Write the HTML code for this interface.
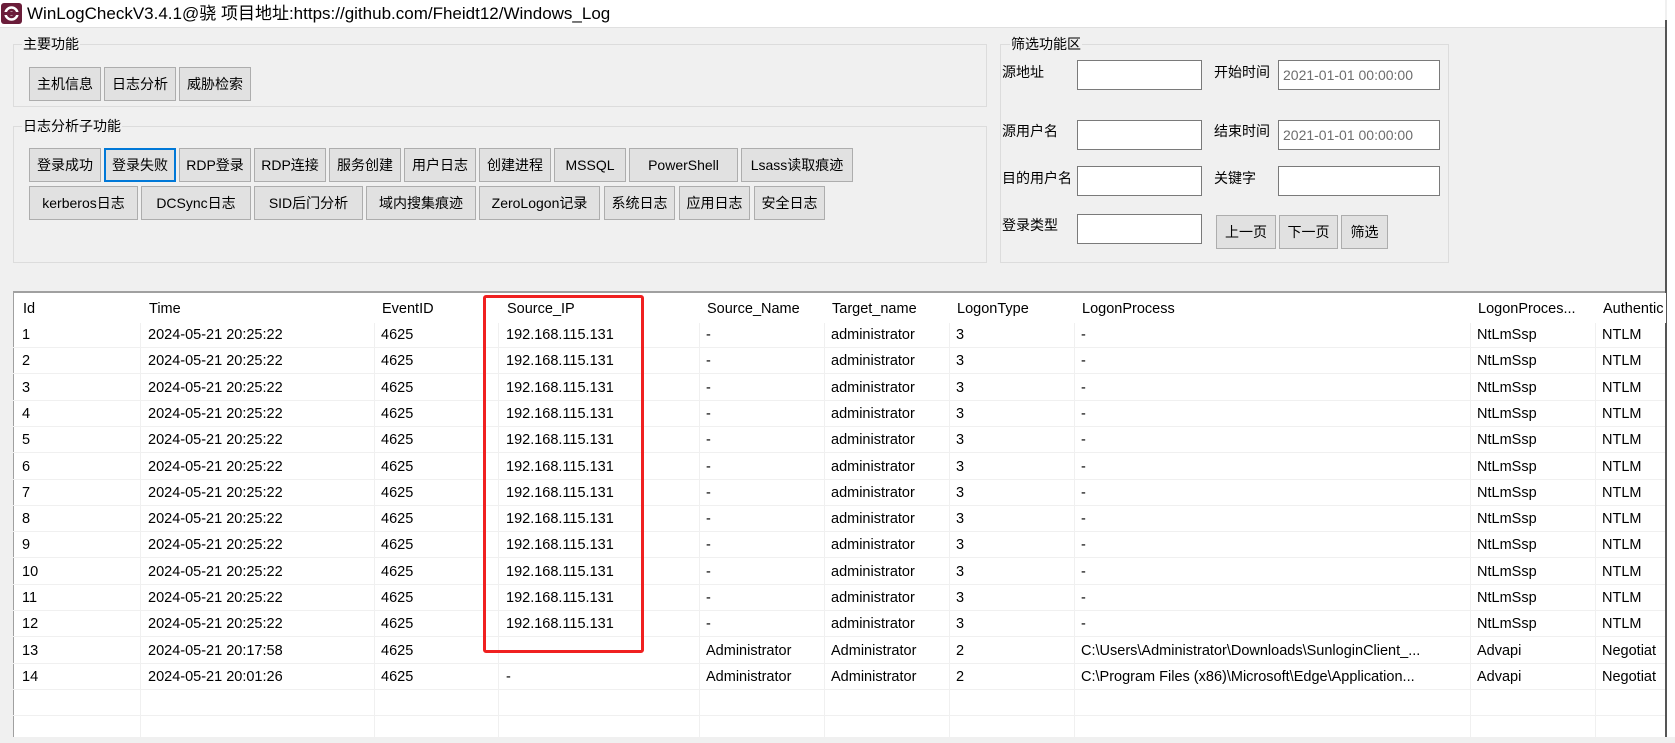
<!DOCTYPE html>
<html><head><meta charset="utf-8"><style>
*{box-sizing:border-box;margin:0;padding:0}
body{width:1675px;height:737px;background:#f0f0f0;font-family:"Liberation Sans","Noto Sans CJK SC",sans-serif;color:#000;position:relative;overflow:hidden}
.a{position:absolute;white-space:nowrap}
.title{left:0;top:0;width:1665px;height:28px;background:#fff;border-bottom:1px solid #e0e0e0}
.gb{position:absolute;border:1px solid #dcdcdc}
.lbl{position:absolute;font-size:14px;background:#f0f0f0;padding:0 1px;line-height:16px}
.btn{position:absolute;background:#e1e1e1;border:1px solid #adadad;font-size:14px;display:flex;align-items:center;justify-content:center;white-space:nowrap}
.in{position:absolute;background:#fff;border:1px solid #7a7a7a;font-size:14px;color:#6d6d6d;padding:0 4px;display:flex;align-items:center;white-space:nowrap}
.fl{position:absolute;font-size:14px;white-space:nowrap}
.tbl{position:absolute;left:13px;top:291px;width:1652px;height:446px;background:#fff;border-top:2px solid #a0a0a0;border-left:1px solid #a0a0a0}
.row{position:absolute;left:0;width:1652px;height:26px;border-bottom:1px solid #f0f0f0}
.c{position:absolute;top:0;height:26px;line-height:26px;font-size:14.5px;white-space:nowrap}
.vl{position:absolute;top:0;width:1px;height:446px;background:#f0f0f0}
</style></head><body>
<div class="a title"></div>
<svg class="a" style="left:1px;top:3px" width="21" height="21" viewBox="0 0 21 21"><rect width="21" height="21" rx="3" fill="#6b1d3a"/><circle cx="10.5" cy="10.5" r="6" fill="none" stroke="#fff" stroke-width="2.5"/><circle cx="10.5" cy="10.5" r="2" fill="#fff"/><rect x="0" y="9" width="21" height="3" fill="#6b1d3a"/></svg>
<div class="a" style="left:27px;top:3px;font-size:17px;line-height:22px">WinLogCheckV3.4.1@骁 项目地址:https://github.com/Fheidt12/Windows_Log</div>
<div class="a" style="left:1665px;top:20px;width:2px;height:717px;background:#555"></div>
<div class="a" style="left:1667px;top:0;width:8px;height:737px;background:#fff"></div>

<div class="gb" style="left:13px;top:44px;width:974px;height:63px"></div>
<div class="lbl" style="left:22px;top:36px">主要功能</div>
<div class="btn" style="left:29px;top:67px;width:72px;height:34px">主机信息</div>
<div class="btn" style="left:104px;top:67px;width:72px;height:34px">日志分析</div>
<div class="btn" style="left:179px;top:67px;width:72px;height:34px">威胁检索</div>

<div class="gb" style="left:13px;top:126px;width:974px;height:137px"></div>
<div class="lbl" style="left:22px;top:118px">日志分析子功能</div>
<div class="btn" style="left:29px;top:148px;width:72px;height:34px">登录成功</div>
<div class="btn" style="left:104px;top:148px;width:72px;height:34px;border:2px solid #0078d7">登录失败</div>
<div class="btn" style="left:179px;top:148px;width:72px;height:34px">RDP登录</div>
<div class="btn" style="left:254px;top:148px;width:72px;height:34px">RDP连接</div>
<div class="btn" style="left:329px;top:148px;width:72px;height:34px">服务创建</div>
<div class="btn" style="left:404px;top:148px;width:72px;height:34px">用户日志</div>
<div class="btn" style="left:479px;top:148px;width:72px;height:34px">创建进程</div>
<div class="btn" style="left:554px;top:148px;width:72px;height:34px">MSSQL</div>
<div class="btn" style="left:629px;top:148px;width:109px;height:34px">PowerShell</div>
<div class="btn" style="left:741px;top:148px;width:112px;height:34px">Lsass读取痕迹</div>
<div class="btn" style="left:29px;top:186px;width:109px;height:34px">kerberos日志</div>
<div class="btn" style="left:141px;top:186px;width:110px;height:34px">DCSync日志</div>
<div class="btn" style="left:254px;top:186px;width:109px;height:34px">SID后门分析</div>
<div class="btn" style="left:366px;top:186px;width:110px;height:34px">域内搜集痕迹</div>
<div class="btn" style="left:479px;top:186px;width:121px;height:34px">ZeroLogon记录</div>
<div class="btn" style="left:604px;top:186px;width:71px;height:34px">系统日志</div>
<div class="btn" style="left:679px;top:186px;width:71px;height:34px">应用日志</div>
<div class="btn" style="left:754px;top:186px;width:71px;height:34px">安全日志</div>

<div class="gb" style="left:1000px;top:44px;width:449px;height:219px"></div>
<div class="lbl" style="left:1010px;top:36px">筛选功能区</div>
<div class="fl" style="left:1002px;top:62px">源地址</div>
<div class="in" style="left:1077px;top:60px;width:125px;height:30px"></div>
<div class="fl" style="left:1214px;top:62px">开始时间</div>
<div class="in" style="left:1278px;top:60px;width:162px;height:30px">2021-01-01 00:00:00</div>
<div class="fl" style="left:1002px;top:121px">源用户名</div>
<div class="in" style="left:1077px;top:120px;width:125px;height:30px"></div>
<div class="fl" style="left:1214px;top:121px">结束时间</div>
<div class="in" style="left:1278px;top:120px;width:162px;height:30px">2021-01-01 00:00:00</div>
<div class="fl" style="left:1002px;top:168px">目的用户名</div>
<div class="in" style="left:1077px;top:166px;width:125px;height:30px"></div>
<div class="fl" style="left:1214px;top:168px">关键字</div>
<div class="in" style="left:1278px;top:166px;width:162px;height:30px"></div>
<div class="fl" style="left:1002px;top:215px">登录类型</div>
<div class="in" style="left:1077px;top:214px;width:125px;height:30px"></div>
<div class="btn" style="left:1216px;top:215px;width:60px;height:34px">上一页</div>
<div class="btn" style="left:1279px;top:215px;width:59px;height:34px">下一页</div>
<div class="btn" style="left:1341px;top:215px;width:47px;height:34px">筛选</div>

<div class="tbl">
<div class="vl" style="left:126px"></div><div class="vl" style="left:360px"></div><div class="vl" style="left:484px"></div><div class="vl" style="left:685px"></div><div class="vl" style="left:810px"></div><div class="vl" style="left:935px"></div><div class="vl" style="left:1060px"></div><div class="vl" style="left:1456px"></div><div class="vl" style="left:1581px"></div>
<div class="row" style="top:0;height:30px;border:none;background:#fff">
<div class="c" style="left:9px;top:3px">Id</div><div class="c" style="left:135px;top:3px">Time</div><div class="c" style="left:368px;top:3px">EventID</div><div class="c" style="left:493px;top:3px">Source_IP</div><div class="c" style="left:693px;top:3px">Source_Name</div><div class="c" style="left:818px;top:3px">Target_name</div><div class="c" style="left:943px;top:3px">LogonType</div><div class="c" style="left:1068px;top:3px">LogonProcess</div><div class="c" style="left:1464px;top:3px">LogonProces...</div><div class="c" style="left:1589px;top:3px">Authentic</div>
</div>
</div>
<div id="rows"></div>
<div class="a" style="left:483px;top:295px;width:161px;height:358px;border:3px solid #f02020;border-radius:3px"></div>
<script>
var h='';var top0=291+31;
for(var i=0;i<16;i++){
 var y=top0+i*26.3, r='';
 if(i<14){
  var ip=i<12?'192.168.115.131':(i==12?'':'-');
  var sn=i<12?'-':'Administrator', tn=i<12?'administrator':'Administrator', lt=i<12?'3':'2';
  var lp=i<12?'-':(i==12?'C:\\Users\\Administrator\\Downloads\\SunloginClient_...':'C:\\Program Files (x86)\\Microsoft\\Edge\\Application...');
  var p2=i<12?'NtLmSsp':'Advapi', au=i<12?'NTLM':'Negotiat';
  var t=i<12?'2024-05-21 20:25:22':(i==12?'2024-05-21 20:17:58':'2024-05-21 20:01:26');
  r='<div class="c" style="left:9px">'+(i+1)+'</div><div class="c" style="left:135px">'+t+'</div><div class="c" style="left:368px">4625</div><div class="c" style="left:493px">'+ip+'</div><div class="c" style="left:693px">'+sn+'</div><div class="c" style="left:818px">'+tn+'</div><div class="c" style="left:943px">'+lt+'</div><div class="c" style="left:1068px">'+lp+'</div><div class="c" style="left:1464px">'+p2+'</div><div class="c" style="left:1589px;width:63px;overflow:hidden">'+au+'</div>';
 }
 h+='<div class="row" style="left:13px;top:'+y+'px;position:absolute">'+r+'</div>';
}
document.getElementById('rows').innerHTML=h;
</script>
</body></html>
